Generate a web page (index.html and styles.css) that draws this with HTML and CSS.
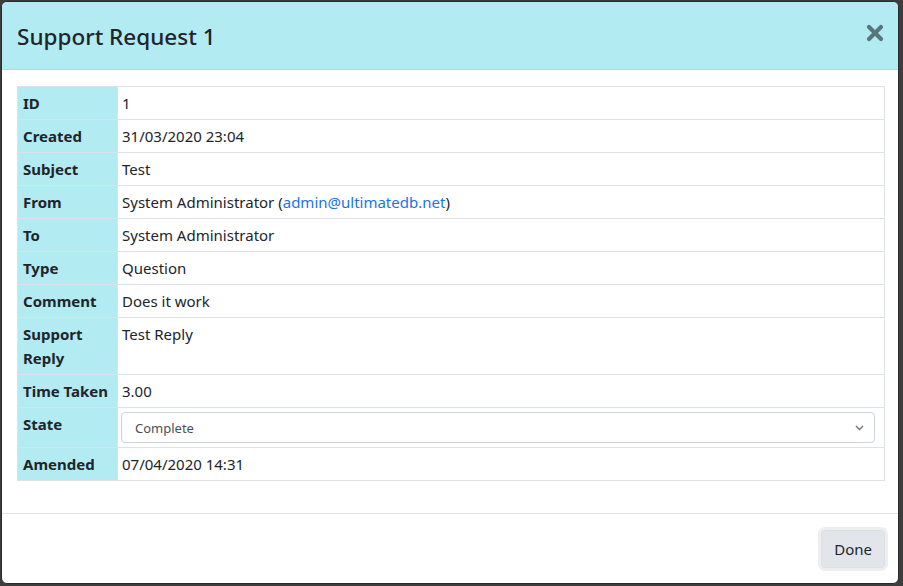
FILE: index.html
```html
<!DOCTYPE html>
<html>
<head>
<meta charset="utf-8">
<link rel="stylesheet" href="styles.css">
</head>
<body>
<div class="modal">
  <div class="modal-header">
    <h4 class="modal-title">Support Request 1</h4>
    <button class="close" aria-label="Close">
      <svg width="18" height="18" viewBox="0 0 18 18"><path d="M3 3L15 15M15 3L3 15" stroke="#5a7479" stroke-width="4.2" stroke-linecap="round"/></svg>
    </button>
  </div>
  <div class="modal-body">
    <table class="details">
      <tr><th>ID</th><td>1</td></tr>
      <tr><th>Created</th><td>31/03/2020 23:04</td></tr>
      <tr><th>Subject</th><td>Test</td></tr>
      <tr><th>From</th><td>System Administrator (<a href="#">admin@ultimatedb.net</a>)</td></tr>
      <tr><th>To</th><td>System Administrator</td></tr>
      <tr><th>Type</th><td>Question</td></tr>
      <tr><th>Comment</th><td>Does it work</td></tr>
      <tr><th>Support Reply</th><td>Test Reply</td></tr>
      <tr><th>Time Taken</th><td>3.00</td></tr>
      <tr class="state-row"><th>State</th><td>
        <div class="select">
          <span>Complete</span>
          <svg width="9" height="6" viewBox="0 0 9 6"><path d="M1 1L4.5 4.5L8 1" fill="none" stroke="#6c757d" stroke-width="1.4"/></svg>
        </div>
      </td></tr>
      <tr><th>Amended</th><td>07/04/2020 14:31</td></tr>
    </table>
  </div>
  <div class="modal-footer">
    <button class="btn">Done</button>
  </div>
</div>
</body>
</html>
```
FILE: styles.css
```css
html, body {
  margin: 0;
  padding: 0;
  background: #3d3d3d;
  height: 586px;
  overflow: hidden;
}
body {
  font-family: "Noto Sans", "Open Sans", sans-serif;
  font-size: 15px;
  color: #212529;
}
.modal {
  margin: 1px 0 0 1px;
  width: 898px;
  height: 583px;
  box-sizing: border-box;
  border: 1px solid #2a2a2a;
  border-radius: 6px;
  background: #fff;
  display: flex;
  flex-direction: column;
  overflow: hidden;
}
.modal-header {
  background: #b2ebf2;
  height: 68px;
  box-sizing: border-box;
  padding: 0 15px;
  display: flex;
  align-items: center;
  justify-content: space-between;
  border-bottom: 1px solid #a8dfe6;
}
.modal-title {
  margin: 0;
  font-size: 22.5px;
  font-weight: 500;
  line-height: 1.5;
  padding-top: 2px;
  color: #212529;
}
.close {
  background: none;
  border: 0;
  padding: 0;
  margin: -5px -1px 0 0;
  width: 18px;
  height: 18px;
  display: flex;
}
.modal-body {
  padding: 16px 14px 0 15px;
  flex: 1;
}
.details {
  width: 868px;
  border-collapse: collapse;
  border: 1px solid #dee2e6;
}
.details th, .details td {
  border: 1px solid #dee2e6;
  padding: 4px 5px 4px 4px;
  line-height: 24px;
  vertical-align: top;
  text-align: left;
}
.details th {
  background: #b2ebf2;
  width: 89px;
  padding-left: 5px;
  font-weight: 700;
}
.details td {
  padding-left: 4px;
}
.details a {
  color: #1a73e8;
  text-decoration: none;
}
.state-row td {
  padding: 4px 9px 4px 3px;
}
.select {
  height: 31px;
  box-sizing: border-box;
  border: 1px solid #ced4da;
  border-radius: 4px;
  display: flex;
  align-items: center;
  justify-content: space-between;
  padding: 0 10px 0 13px;
  font-size: 13px;
  color: #495057;
}
.modal-footer {
  height: 70px;
  box-sizing: border-box;
  border-top: 1px solid #e2e4e6;
  display: flex;
  justify-content: flex-end;
  align-items: center;
  padding: 0 13px 0 0;
}
.btn {
  font-family: inherit;
  font-size: 15px;
  line-height: 24px;
  height: 38px;
  padding: 6px 12px;
  border: 1px solid #dae0e5;
  border-radius: 4px;
  background: #e2e6ea;
  color: #212529;
  box-shadow: 0 0 0 3px #eceef0;
}
```
